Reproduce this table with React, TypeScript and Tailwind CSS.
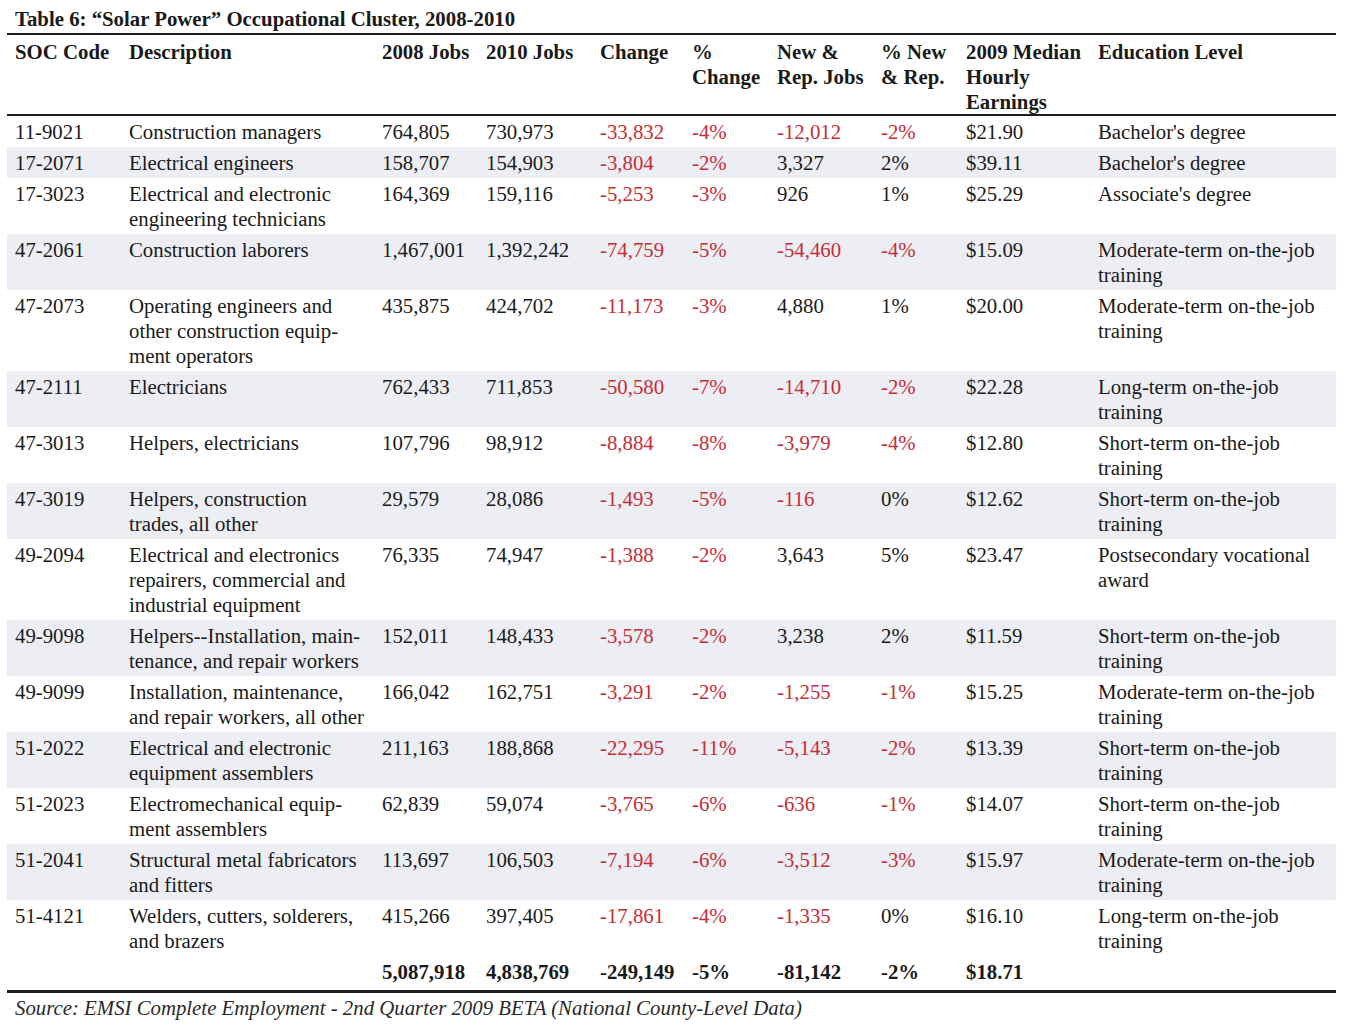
type Row = {
  soc: string;
  desc: string[];
  y2008: string;
  y2010: string;
  change: string;
  pctChange: string;
  newRep: string;
  pctNew: string;
  earnings: string;
  edu: string[];
};

const rows: Row[] = [
  { soc: "11-9021", desc: ["Construction managers"], y2008: "764,805", y2010: "730,973", change: "-33,832", pctChange: "-4%", newRep: "-12,012", pctNew: "-2%", earnings: "$21.90", edu: ["Bachelor's degree"] },
  { soc: "17-2071", desc: ["Electrical engineers"], y2008: "158,707", y2010: "154,903", change: "-3,804", pctChange: "-2%", newRep: "3,327", pctNew: "2%", earnings: "$39.11", edu: ["Bachelor's degree"] },
  { soc: "17-3023", desc: ["Electrical and electronic", "engineering technicians"], y2008: "164,369", y2010: "159,116", change: "-5,253", pctChange: "-3%", newRep: "926", pctNew: "1%", earnings: "$25.29", edu: ["Associate's degree"] },
  { soc: "47-2061", desc: ["Construction laborers"], y2008: "1,467,001", y2010: "1,392,242", change: "-74,759", pctChange: "-5%", newRep: "-54,460", pctNew: "-4%", earnings: "$15.09", edu: ["Moderate-term on-the-job", "training"] },
  { soc: "47-2073", desc: ["Operating engineers and", "other construction equip-", "ment operators"], y2008: "435,875", y2010: "424,702", change: "-11,173", pctChange: "-3%", newRep: "4,880", pctNew: "1%", earnings: "$20.00", edu: ["Moderate-term on-the-job", "training"] },
  { soc: "47-2111", desc: ["Electricians"], y2008: "762,433", y2010: "711,853", change: "-50,580", pctChange: "-7%", newRep: "-14,710", pctNew: "-2%", earnings: "$22.28", edu: ["Long-term on-the-job", "training"] },
  { soc: "47-3013", desc: ["Helpers, electricians"], y2008: "107,796", y2010: "98,912", change: "-8,884", pctChange: "-8%", newRep: "-3,979", pctNew: "-4%", earnings: "$12.80", edu: ["Short-term on-the-job", "training"] },
  { soc: "47-3019", desc: ["Helpers, construction", "trades, all other"], y2008: "29,579", y2010: "28,086", change: "-1,493", pctChange: "-5%", newRep: "-116", pctNew: "0%", earnings: "$12.62", edu: ["Short-term on-the-job", "training"] },
  { soc: "49-2094", desc: ["Electrical and electronics", "repairers, commercial and", "industrial equipment"], y2008: "76,335", y2010: "74,947", change: "-1,388", pctChange: "-2%", newRep: "3,643", pctNew: "5%", earnings: "$23.47", edu: ["Postsecondary vocational", "award"] },
  { soc: "49-9098", desc: ["Helpers--Installation, main-", "tenance, and repair workers"], y2008: "152,011", y2010: "148,433", change: "-3,578", pctChange: "-2%", newRep: "3,238", pctNew: "2%", earnings: "$11.59", edu: ["Short-term on-the-job", "training"] },
  { soc: "49-9099", desc: ["Installation, maintenance,", "and repair workers, all other"], y2008: "166,042", y2010: "162,751", change: "-3,291", pctChange: "-2%", newRep: "-1,255", pctNew: "-1%", earnings: "$15.25", edu: ["Moderate-term on-the-job", "training"] },
  { soc: "51-2022", desc: ["Electrical and electronic", "equipment assemblers"], y2008: "211,163", y2010: "188,868", change: "-22,295", pctChange: "-11%", newRep: "-5,143", pctNew: "-2%", earnings: "$13.39", edu: ["Short-term on-the-job", "training"] },
  { soc: "51-2023", desc: ["Electromechanical equip-", "ment assemblers"], y2008: "62,839", y2010: "59,074", change: "-3,765", pctChange: "-6%", newRep: "-636", pctNew: "-1%", earnings: "$14.07", edu: ["Short-term on-the-job", "training"] },
  { soc: "51-2041", desc: ["Structural metal fabricators", "and fitters"], y2008: "113,697", y2010: "106,503", change: "-7,194", pctChange: "-6%", newRep: "-3,512", pctNew: "-3%", earnings: "$15.97", edu: ["Moderate-term on-the-job", "training"] },
  { soc: "51-4121", desc: ["Welders, cutters, solderers,", "and brazers"], y2008: "415,266", y2010: "397,405", change: "-17,861", pctChange: "-4%", newRep: "-1,335", pctNew: "0%", earnings: "$16.10", edu: ["Long-term on-the-job", "training"] },
];

const grid =
  "grid grid-cols-[114px_253px_104px_114px_92px_85px_104px_85px_132px_246px]";

const Lines = ({ lines }: { lines: string[] }) => (
  <>
    {lines.map((l, i) => (
      <div key={i}>{l}</div>
    ))}
  </>
);

// negative figures are printed in red
const Num = ({ v }: { v: string }) => (
  <div className={`pl-[8px] ${v.startsWith("-") ? "text-[#c52d38]" : ""}`}>{v}</div>
);

const headers = [
  ["SOC Code"],
  ["Description"],
  ["2008 Jobs"],
  ["2010 Jobs"],
  ["Change"],
  ["%", "Change"],
  ["New &", "Rep. Jobs"],
  ["% New", "& Rep."],
  ["2009 Median", "Hourly", "Earnings"],
  ["Education Level"],
];

export default function App() {
  return (
    <div
      className="w-[1350px] h-[1025px] bg-white text-[#1a1a1a] text-[20.8px] leading-[25px] whitespace-nowrap"
      style={{ fontFamily: '"Liberation Serif", "Times New Roman", serif' }}
    >
      <div className="pl-[7px] w-[1336px]">
        <h1 className="pl-[8px] pt-[6px] pb-[2px] font-bold">
          Table 6: “Solar Power” Occupational Cluster, 2008-2010
        </h1>

        <div className="border-t-2 border-[#1e1e1e]">
          <div className={`${grid} pt-[4px] h-[81px] font-bold border-b-2 border-[#1e1e1e]`}>
            {headers.map((h, i) => (
              <div key={i} className="pl-[8px]">
                <Lines lines={h} />
              </div>
            ))}
          </div>

          {rows.map((r, i) => (
            <div
              key={r.soc}
              className={`${grid} pt-[3px] pb-[3px] ${i % 2 === 1 ? "bg-[#eceef3]" : ""}`}
            >
              <div className="pl-[8px]">{r.soc}</div>
              <div className="pl-[8px]">
                <Lines lines={r.desc} />
              </div>
              <div className="pl-[8px]">{r.y2008}</div>
              <div className="pl-[8px]">{r.y2010}</div>
              <Num v={r.change} />
              <Num v={r.pctChange} />
              <Num v={r.newRep} />
              <Num v={r.pctNew} />
              <div className="pl-[8px]">{r.earnings}</div>
              <div className="pl-[8px]">
                <Lines lines={r.edu} />
              </div>
            </div>
          ))}

          <div className={`${grid} pt-[3px] pb-[6px] font-bold border-b-[3px] border-[#1e1e1e]`}>
            <div />
            <div />
            <div className="pl-[8px]">5,087,918</div>
            <div className="pl-[8px]">4,838,769</div>
            <div className="pl-[8px]">-249,149</div>
            <div className="pl-[8px]">-5%</div>
            <div className="pl-[8px]">-81,142</div>
            <div className="pl-[8px]">-2%</div>
            <div className="pl-[8px]">$18.71</div>
            <div />
          </div>
        </div>

        <p className="pl-[8px] pt-[2px] italic text-[#2a2a2a]">
          Source: EMSI Complete Employment - 2nd Quarter 2009 BETA (National County-Level Data)
        </p>
      </div>
    </div>
  );
}
